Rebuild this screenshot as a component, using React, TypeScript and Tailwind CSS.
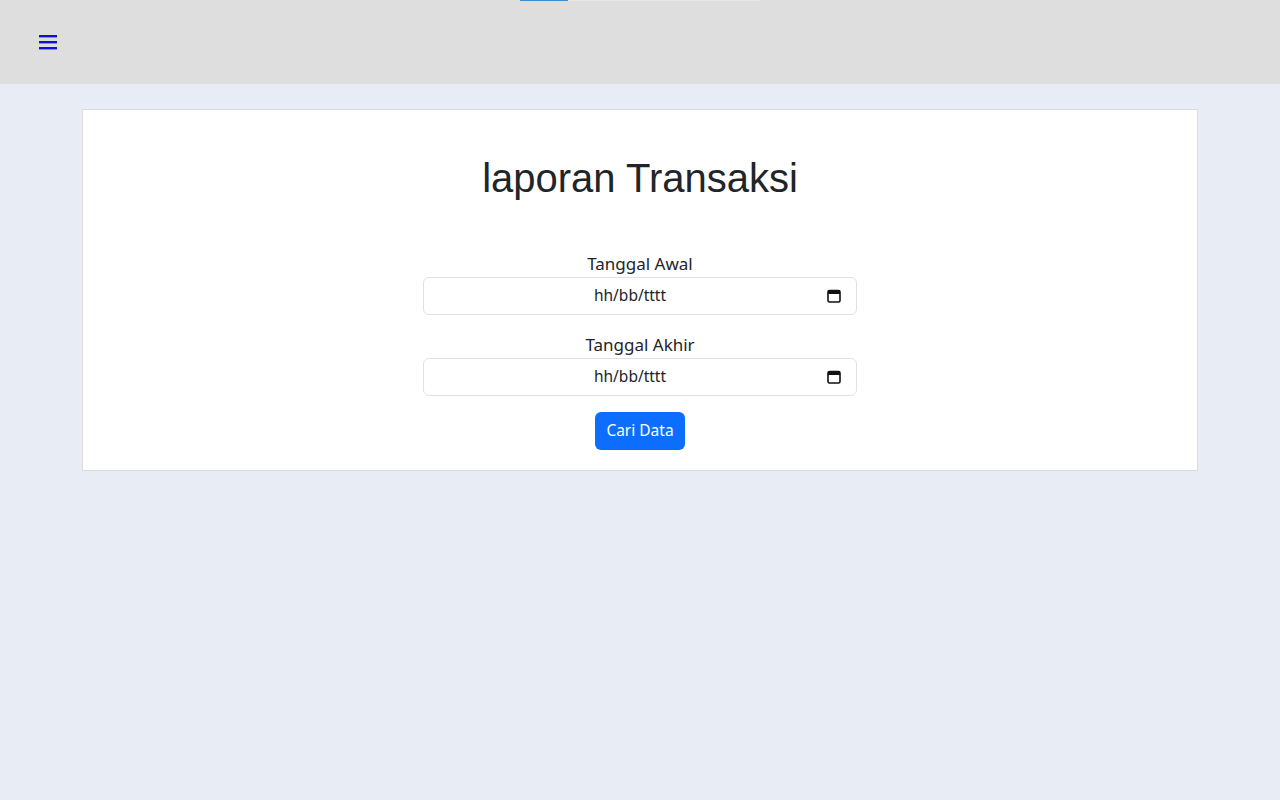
const CalendarIcon: React.FC = () => (
  <svg width="14" height="14" viewBox="0 0 14 14" className="shrink-0">
    <rect x="1" y="1.5" width="12" height="11.5" rx="1.5" fill="none" stroke="#111" strokeWidth="1.6" />
    <rect x="1" y="1.5" width="12" height="3.5" fill="#111" />
  </svg>
);

const DateField: React.FC<{ label: string; className?: string }> = ({ label, className }) => {
  return (
    <div className={"flex flex-col items-center " + (className ?? "")}>
      <label className="text-[17px] leading-[27px] text-[#212529]">{label}</label>
      <div className="relative w-[434px] h-[38px] rounded-[6px] border border-[#dee2e6] bg-white flex items-center justify-center pr-[20px]">
        <span className="text-[15.5px] text-[#212529]">hh/bb/tttt</span>
        <div className="absolute right-[15px] top-[11px]">
          <CalendarIcon />
        </div>
      </div>
    </div>
  );
};

const App: React.FC = () => {
  return (
    <div className="min-h-[800px] bg-[#e8ecf4] font-['Noto_Sans',sans-serif]">
      <div className="relative h-[84px] bg-[#dedede] flex items-center pl-[39px]">
        {/* loading bar */}
        <div className="absolute top-0 left-[520px] w-[240px] h-[1px] bg-[#e8e8e8]">
          <div className="w-[48px] h-full bg-[#3d8fd1]" />
        </div>
        <button className="p-0 mt-[-1px]">
          <svg width="18" height="16" viewBox="0 0 18 16">
            <rect x="0" y="1" width="18" height="2.4" fill="#1111d6" />
            <rect x="0" y="7" width="18" height="2.4" fill="#1111d6" />
            <rect x="0" y="13" width="18" height="2.4" fill="#1111d6" />
          </svg>
        </button>
      </div>

      <div className="mx-[82px] mt-[25px] bg-white border border-[#dcdcdc] pt-[44px] pb-[20px] flex flex-col items-center">
        <h1 className="font-['Liberation_Sans',Arial,sans-serif] text-[40px] leading-[48px] text-[#212529]">
          laporan Transaksi
        </h1>
        <DateField label="Tanggal Awal" className="mt-[48px]" />
        <DateField label="Tanggal Akhir" className="mt-[16px]" />
        <button className="mt-[16px] h-[38px] w-[90px] rounded-[6px] bg-[#0d6efd] text-white text-[15.5px]">
          Cari Data
        </button>
      </div>
    </div>
  );
};

export default App;
